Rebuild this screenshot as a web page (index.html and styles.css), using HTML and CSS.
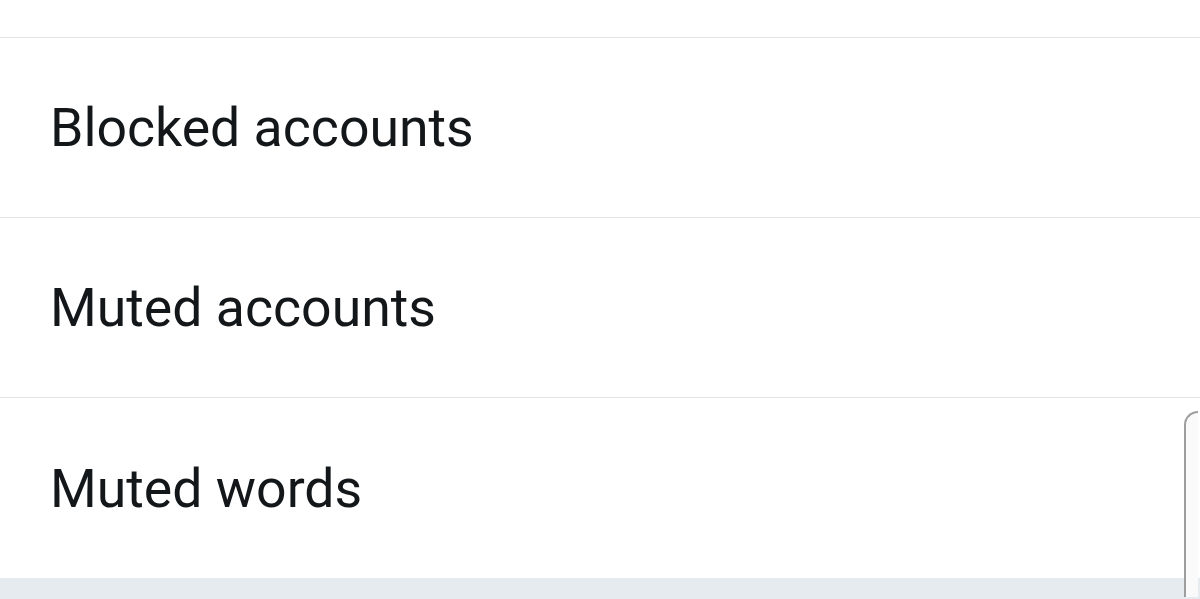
FILE: index.html
```html
<!DOCTYPE html>
<html lang="en">
<head>
    <meta charset="UTF-8">
    <meta name="viewport" content="width=device-width, initial-scale=1.0">
    <title>Mute and block</title>
    <link rel="stylesheet" href="styles.css">
</head>
<body>
    <div class="settings-list">
        <div class="settings-row top-stub"></div>
        <div class="settings-row">Blocked accounts</div>
        <div class="settings-row">Muted accounts</div>
        <div class="settings-row">Muted words</div>
        <div class="section-gap"></div>
    </div>

    <div class="scroll-thumb"></div>
</body>
</html>
```

FILE: styles.css
```css
html, body {
    margin: 0;
    padding: 0;
    background: #ffffff;
    overflow: hidden;
}
body {
    font-family: Roboto, "Noto Sans", Arial, sans-serif;
    color: #14171a;
    height: 599px;
    position: relative;
}
.settings-list {
    display: flex;
    flex-direction: column;
}
.settings-row {
    height: 179px;
    display: flex;
    align-items: center;
    padding: 0 50px;
    font-size: 53.6px;
    border-bottom: 1px solid #e1e5e8;
}
.settings-row.top-stub {
    height: 37px;
}
.settings-row:nth-child(4) {
    height: 180px;
    border-bottom: none;
}
.section-gap {
    height: 21px;
    background: #e6ebef;
}
.scroll-thumb {
    position: absolute;
    left: 1184px;
    top: 411px;
    width: 12px;
    height: 184px;
    border: 2px solid #9e9e9e;
    border-right: none;
    border-bottom: none;
    border-radius: 14px 0 0 0;
    background: #fafafa;
}
```
